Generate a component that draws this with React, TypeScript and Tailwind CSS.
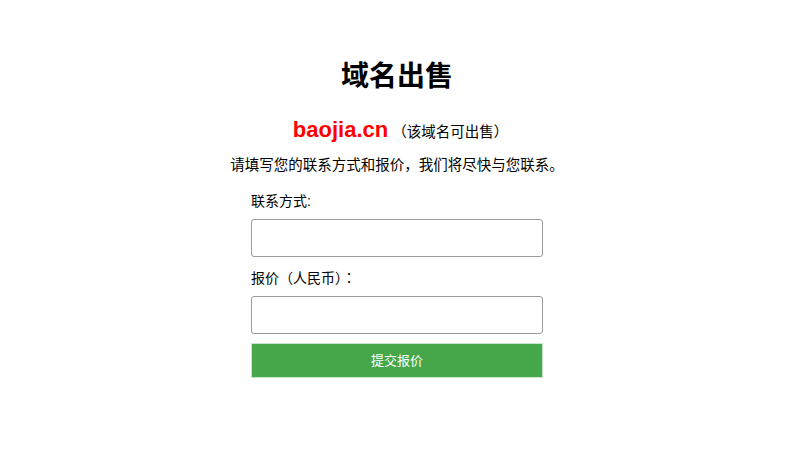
import React from "react";

export default function App() {
  const font = { fontFamily: '"Liberation Sans", Arial, "Noto Sans CJK SC", sans-serif' };
  return (
    <div className="w-[800px] h-[470px] bg-white text-black" style={font}>
      <div className="flex flex-col items-center pt-[60px] pr-[6px]">
        <h1 className="text-[28px] font-bold leading-[34px] m-0">域名出售</h1>
        <div className="mt-[21px] h-[30px] flex items-baseline leading-[30px] pl-[7px]">
          <span className="text-[22px] font-bold text-[#ff0000]">baojia.cn</span>
          <span className="text-[14.5px] ml-[4px]">（该域名可出售）</span>
        </div>
        <p className="mt-[10px] text-[14.5px] leading-[20px]">请填写您的联系方式和报价，我们将尽快与您联系。</p>
        <form className="mt-[16px] w-[292px] flex flex-col" onSubmit={(e) => e.preventDefault()}>
          <label className="text-[14px] leading-[20px] h-[20px]">联系方式:</label>
          <input
            type="text"
            className="mt-[8px] h-[38px] w-full border border-[#9a9a9a] rounded-[3px] bg-white outline-none px-2"
          />
          <label className="mt-[10px] text-[14px] leading-[20px] h-[20px]">
            报价（人民币）
            <span style={{ fontFamily: '"Noto Sans CJK TC", sans-serif' }}>：</span>
          </label>
          <input
            type="text"
            className="mt-[9px] h-[38px] w-full border border-[#9a9a9a] rounded-[3px] bg-white outline-none px-2"
          />
          <button
            type="submit"
            className="mt-[9px] h-[35px] w-full bg-[#46a64a] text-white text-[13px] border border-[#c8e6c9]"
          >
            提交报价
          </button>
        </form>
      </div>
    </div>
  );
}
